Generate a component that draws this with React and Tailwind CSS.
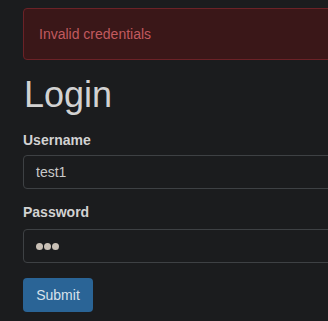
export default function App() {
  return (
    <div className="w-[328px] h-[321px] overflow-hidden bg-[#1b1c1e] font-['Liberation_Sans',Arial,sans-serif]">
      <div className="pl-[23px] pt-[8px] w-[700px]">
        <div className="h-[52px] rounded-[4px] border border-[#6b2227] bg-[#3a1718] px-[15px] flex items-center text-[14px] text-[#c25a5f]">
          Invalid credentials
        </div>
        <h1 className="mt-[15px] text-[36px] leading-[40px] text-[#d2d2d2] pl-px">Login</h1>
        <div className="mt-[15px] text-[14px] leading-[20px] font-bold text-[#d2d2d2]">Username</div>
        <div className="mt-[5px] h-[34px] rounded-[4px] border border-[#3e4144] flex items-center pl-[12px] text-[14px] text-[#c9c9c9]">
          test1
        </div>
        <div className="mt-[13px] text-[14px] leading-[20px] font-bold text-[#d2d2d2]">Password</div>
        <div className="mt-[7px] h-[34px] rounded-[4px] border border-[#3e4144] flex items-center pl-[12px] gap-[1px]">
          <span className="w-[7px] h-[7px] rounded-full bg-[#c9c0b6]" />
          <span className="w-[7px] h-[7px] rounded-full bg-[#c9c0b6]" />
          <span className="w-[7px] h-[7px] rounded-full bg-[#c9c0b6]" />
        </div>
        <button className="mt-[15px] h-[34px] w-[70px] rounded-[4px] bg-[#2a6496] text-[14px] text-[#d8e2ec] flex items-center justify-center">
          Submit
        </button>
      </div>
    </div>
  );
}
